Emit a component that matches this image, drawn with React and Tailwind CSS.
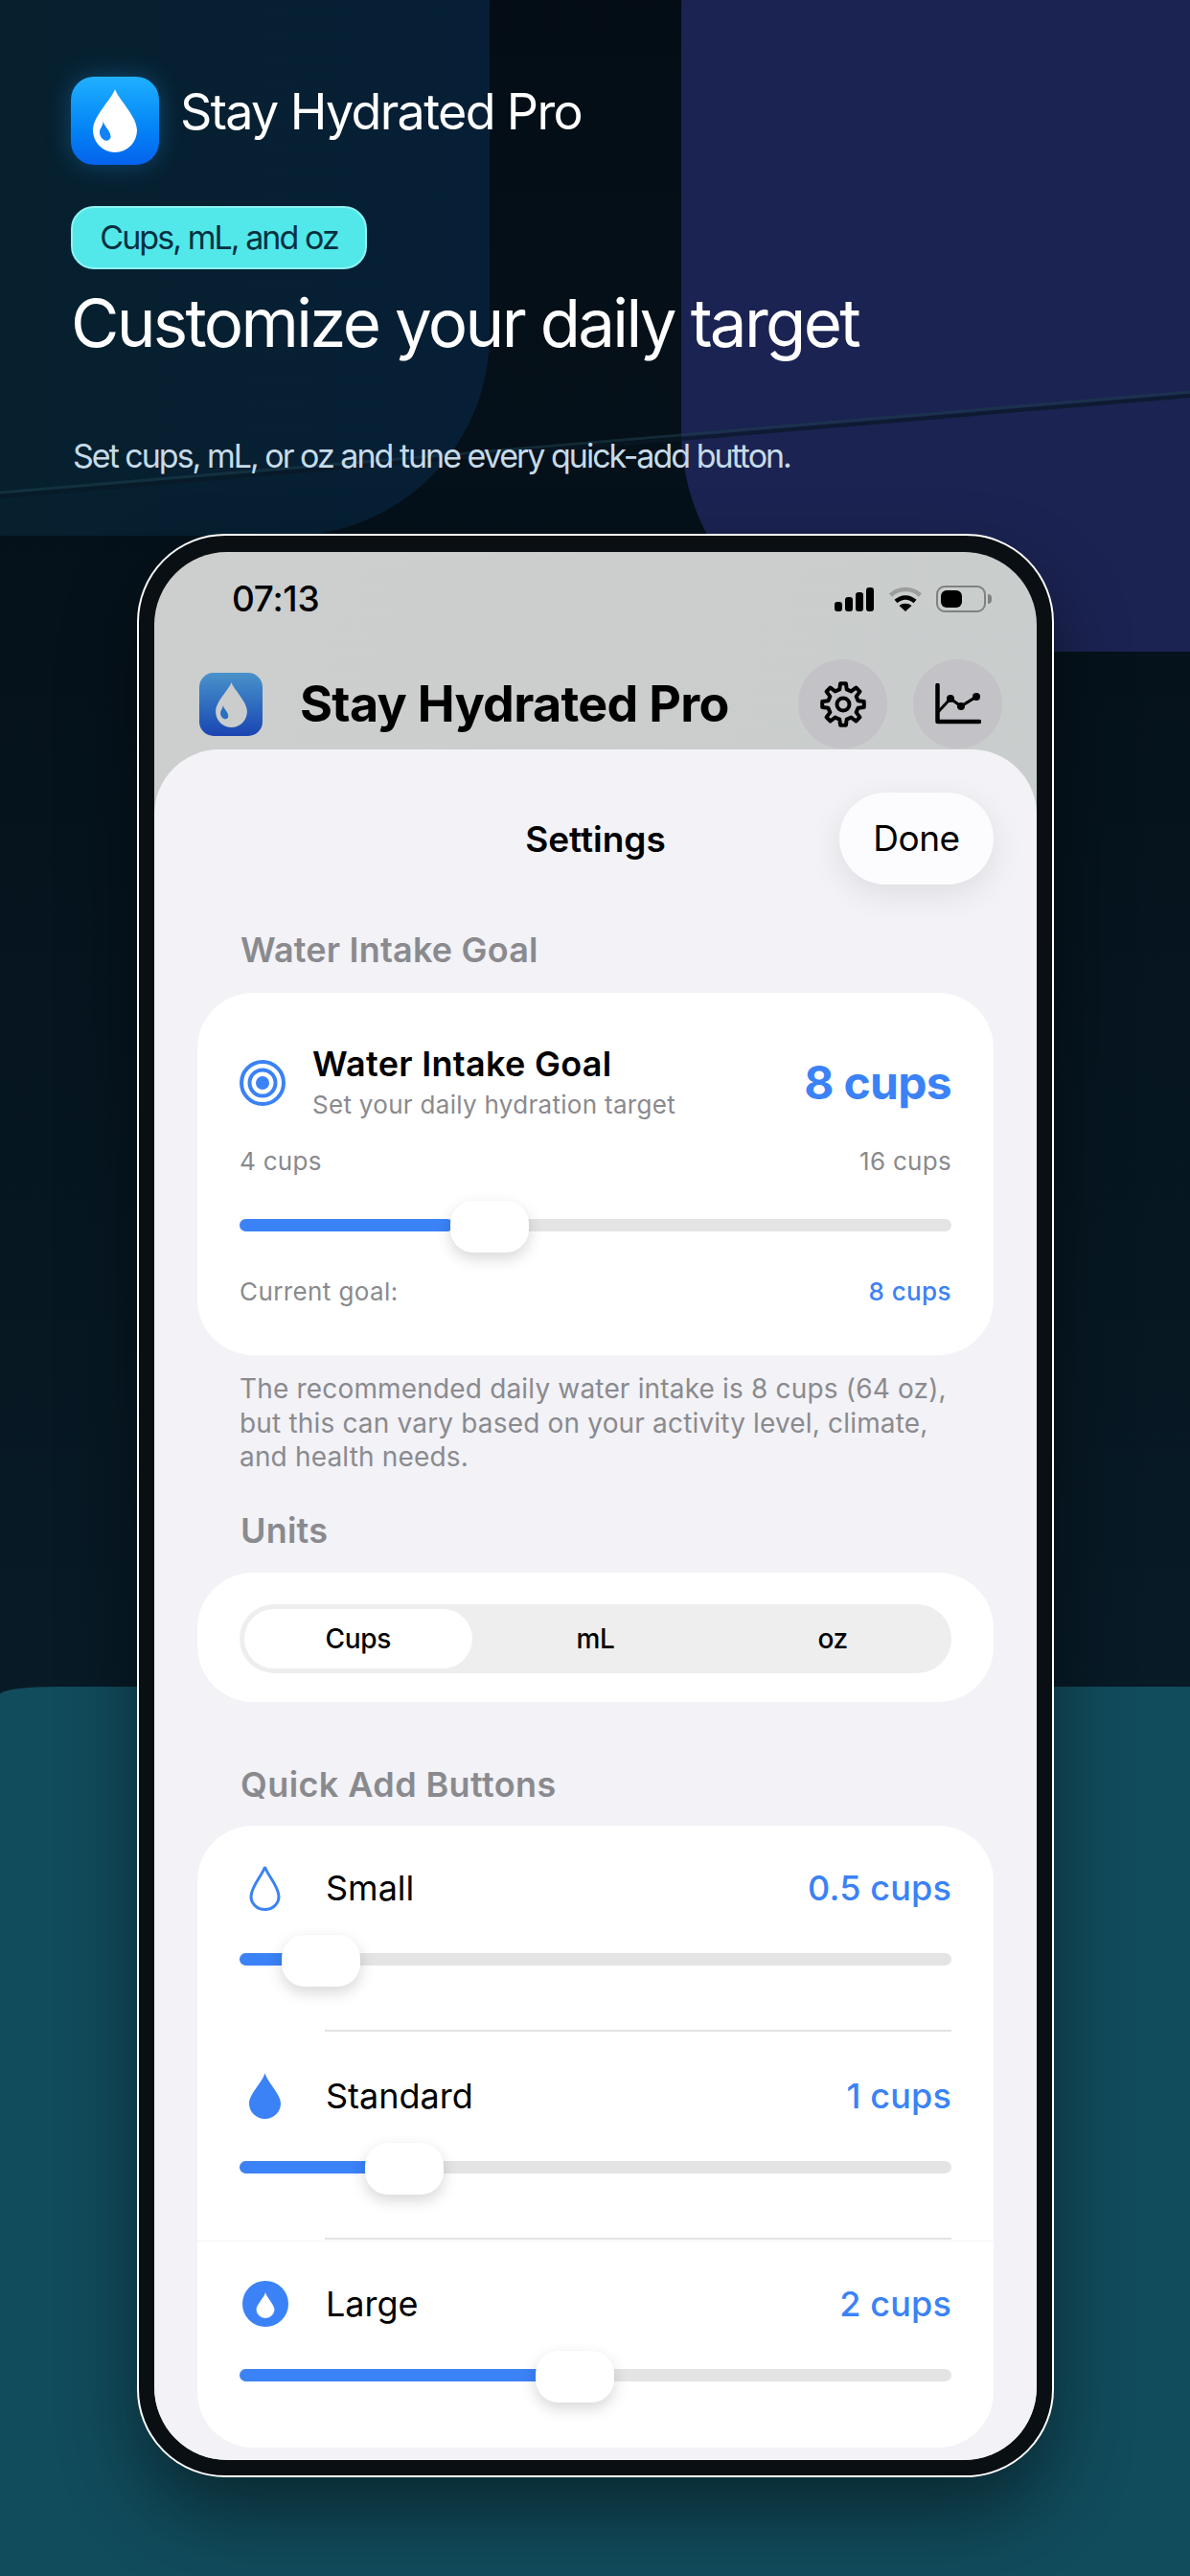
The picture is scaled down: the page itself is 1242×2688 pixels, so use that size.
const F = { fontFamily: 'Inter, "Liberation Sans", sans-serif' };

function Drop({ className, inner }) {
  return (
    <svg viewBox="0 0 46 66" className={className}>
      <path d="M23 0C26 10 46 28 46 43A23 23 0 0 1 0 43C0 28 20 10 23 0Z" fill="currentColor" />
      <path d="M10.700 33C11 38 18 43 18.500 49C19 53 14 55 11.500 53C8 51 6 46 7.500 42C9 39 10.700 37 10.700 33Z" fill={inner} />
    </svg>
  );
}

function gearPath() {
  const pts = [];
  const teeth = 8;
  for (let i = 0; i < teeth; i++) {
    const a = (i * 2 * Math.PI) / teeth;
    const s = (2 * Math.PI) / teeth;
    [[-0.3, 16], [-0.17, 22], [0.17, 22], [0.3, 16]].forEach(([o, r]) => {
      const t = a + o * s;
      pts.push(`${(24 + r * Math.sin(t)).toFixed(2)} ${(24 - r * Math.cos(t)).toFixed(2)}`);
    });
  }
  return `M${pts.join("L")}Z`;
}

function Gear() {
  return (
    <svg viewBox="0 0 48 48" className="h-[48px] w-[48px]" fill="none" stroke="#000" strokeWidth="4" strokeLinejoin="round">
      <path d={gearPath()} />
      <circle cx="24" cy="24" r="6.500" />
    </svg>
  );
}

function Chart() {
  return (
    <svg viewBox="0 0 48 43" className="h-[43px] w-[48px]" fill="none" stroke="#000" strokeLinecap="round" strokeLinejoin="round">
      <path d="M2.500 2V40H46" strokeWidth="4.500" />
      <path d="M3 30L16 16L27 24L43 14" strokeWidth="3" />
      <circle cx="16" cy="16" r="4" fill="#000" stroke="none" />
      <circle cx="27" cy="24" r="4" fill="#000" stroke="none" />
      <circle cx="43" cy="14" r="4" fill="#000" stroke="none" />
    </svg>
  );
}

function Slider({ fill, thumb }) {
  return (
    <div className="relative h-[13px] w-full rounded-full bg-[#e4e4e5]">
      <div className="h-full rounded-full bg-[#3b82f6]" style={{ width: fill }} />
      <div className="absolute top-[-19px] h-[54px] w-[82px] rounded-[24px] bg-white shadow-[0_6px_16px_rgba(0,0,0,0.16)]" style={{ left: thumb }} />
    </div>
  );
}

function QuickRow({ icon, label, value, fill, thumb, divider, line }) {
  return (
    <div className="relative h-[217px] pt-[40px]">
      <div className="flex h-[50px] items-center">
        <div className="flex w-[90px] justify-start">{icon}</div>
        <span className="flex-1 text-[36px] leading-[50px] text-black">{label}</span>
        <span className="text-[36px] leading-[50px] font-medium tracking-[0.15px] text-[#3b82f6]">{value}</span>
      </div>
      <div className="mt-[43px]"><Slider fill={fill} thumb={thumb} /></div>
      {divider && <div className="absolute bottom-[2px] left-[89px] right-0 h-[2px] bg-[#e3e3e5]" />}
      {line && <div className="absolute bottom-0 left-[-44px] right-[-44px] h-[1px] bg-[#f4f4f6]" />}
    </div>
  );
}

export default function App() {
  return (
    <div className="relative h-[2688px] w-[1242px] overflow-hidden bg-gradient-to-b from-[#040d15] to-[#0a2230]" style={F}>
      <div className="absolute left-0 top-0 h-[559px] w-[511px] rounded-br-[210px] bg-gradient-to-r from-[#06202e] to-[#071f36]" />
      <div className="absolute left-[711px] top-[-120px] h-[800px] w-[700px] rounded-tl-[130px] rounded-bl-[230px] bg-[#1b2352]" />
      <div className="absolute left-0 top-[1760px] h-[928px] w-[1242px] rounded-tl-[60px_8px] bg-[#114c5c]" />
      <svg className="absolute left-0 top-[400px] h-[130px] w-[1242px]" viewBox="0 0 1242 130">
        <path d="M0 114L1242 9" stroke="#1c3f4c" strokeWidth="3" opacity="0.55" />
        <path d="M0 118L1242 13" stroke="#0a1826" strokeWidth="4" opacity="0.75" />
      </svg>

      <div className="relative flex flex-col px-[74px] pt-[80px]">
        <div className="flex items-start gap-[22px]">
          <div className="flex h-[92px] w-[92px] items-center justify-center rounded-[24px] bg-gradient-to-b from-[#20b0ff] to-[#0862ee] shadow-[0_0_26px_rgba(40,170,255,0.3)]">
            <Drop className="h-[66px] w-[46px] text-white" inner="#1183f7" />
          </div>
          <span className="mt-[5px] text-[52px] leading-[64px] tracking-[-1.650px] text-white">Stay Hydrated Pro</span>
        </div>
        <div className="mt-[43px] flex h-[66px] w-[309px] items-center justify-center rounded-[24px] border-2 border-[#8df3f3] bg-[#52e8ea] pb-[2px] text-[34px] tracking-[-1.950px] text-[#06303f]">
          Cups, mL, and oz
        </div>
        <h1 className="mt-[15px] text-[69px] leading-[82px] font-normal tracking-[-2.670px] text-white">Customize your daily target</h1>
        <p className="ml-[2px] mt-[76px] text-[34px] leading-[44px] tracking-[-2px] text-[#c6dbe8]">Set cups, mL, or oz and tune every quick-add button.</p>
      </div>

      <div className="absolute left-[143px] top-[557px] h-[2028px] w-[957px] rounded-[92px] border-2 border-white bg-[#0a0f13] px-[16px] pb-[16px] pt-[17px] shadow-[0_40px_80px_rgba(0,0,0,0.45)]">
        <div className="flex h-full flex-col overflow-hidden rounded-[76px] bg-gradient-to-br from-[#cdcfce] to-[#c6cbcb]">
          <div className="flex h-[98px] shrink-0 items-center justify-between pl-[81px] pr-[47px]">
            <span className="text-[37px] leading-[44px] font-medium tracking-[-0.3px] text-black">07:13</span>
            <div className="flex items-center gap-[15px]">
              <svg viewBox="0 0 42 25" className="h-[25px] w-[42px]">
                <rect x="0" y="15" width="8" height="10" rx="3" />
                <rect x="11" y="10" width="8" height="15" rx="3" />
                <rect x="22" y="5" width="8" height="20" rx="3" />
                <rect x="33" y="0" width="8" height="25" rx="3" />
              </svg>
              <svg viewBox="0 0 34 26" className="h-[26px] w-[34px]" fill="none">
                <path d="M1.500 9C10 1 24 1 32.500 9" stroke="#9c9e9e" strokeWidth="4.500" />
                <path d="M7 15.500C13 10 21 10 27 15.500" stroke="#000" strokeWidth="4.500" />
                <path d="M17 26L10.500 20C14 17 20 17 23.500 20Z" fill="#000" />
              </svg>
              <div className="flex items-center gap-[2px]">
                <div className="h-[28px] w-[52px] rounded-[9px] border-2 border-[#808282] p-[3px]">
                  <div className="h-full w-[22px] rounded-[6px] bg-black" />
                </div>
                <div className="h-[10px] w-[4px] rounded-r-full bg-[#808282]" />
              </div>
            </div>
          </div>
          <div className="flex h-[108px] shrink-0 items-start pl-[47px] pr-[36px] pt-[14px]">
            <div className="mt-[14px] flex h-[66px] w-[66px] items-center justify-center rounded-[15px] bg-gradient-to-b from-[#4a92ca] to-[#1c44b2]">
              <Drop className="h-[47px] w-[33px] text-[#cbcdcd]" inner="#2a6fc0" />
            </div>
            <span className="ml-[39px] mt-[12px] text-[52px] leading-[70px] font-bold tracking-[-0.7px] text-black">Stay Hydrated Pro</span>
            <div className="ml-auto flex gap-[27px]">
              <div className="flex h-[93px] w-[93px] items-center justify-center rounded-full bg-[#c3c2c6]"><Gear /></div>
              <div className="flex h-[93px] w-[93px] items-center justify-center rounded-full bg-[#c3c2c6]"><Chart /></div>
            </div>
          </div>
          <div className="relative flex-1 rounded-t-[68px] bg-[#f2f2f7] px-[45px]">
            <div className="relative flex h-[141px] items-center justify-center pt-[46px]">
              <span className="text-[37px] font-semibold text-black">Settings</span>
              <div className="absolute right-0 top-[45px] flex h-[96px] w-[161px] items-center justify-center rounded-full bg-[#fcfcfe] text-[37px] tracking-[-0.5px] text-black shadow-[0_10px_34px_rgba(0,0,0,0.09)]">Done</div>
            </div>
            <div className="ml-[45px] mt-[46px] text-[36px] leading-[44px] font-semibold tracking-[0.2px] text-[#8a8a8e]">Water Intake Goal</div>
            <div className="mt-[23px] h-[378px] rounded-[58px] bg-white px-[44px] pt-[52px]">
              <div className="flex items-center">
                <svg viewBox="0 0 48 48" className="h-[48px] w-[48px]">
                  <circle cx="24" cy="24" r="22" fill="none" stroke="#3b82f6" strokeWidth="4" />
                  <circle cx="24" cy="24" r="13.500" fill="none" stroke="#3b82f6" strokeWidth="4" />
                  <circle cx="24" cy="24" r="7" fill="#3b82f6" />
                </svg>
                <div className="ml-[28px] flex-1">
                  <div className="text-[36px] leading-[44px] font-semibold tracking-[0.3px] text-black">Water Intake Goal</div>
                  <div className="mt-[3px] text-[26px] leading-[36px] tracking-[0.3px] text-[#8a8a8e]">Set your daily hydration target</div>
                </div>
                <div className="text-[48px] leading-[60px] font-bold tracking-[-0.7px] text-[#3b82f6]">8 cups</div>
              </div>
              <div className="mt-[23px] flex justify-between text-[26px] leading-[36px] tracking-[0.3px] text-[#8a8a8e]">
                <span>4 cups</span>
                <span>16 cups</span>
              </div>
              <div className="mt-[42px]"><Slider fill="30%" thumb="220px" /></div>
              <div className="mt-[45px] flex justify-between text-[26px] leading-[36px] tracking-[0.4px] text-[#8a8a8e]">
                <span>Current goal:</span>
                <span className="font-medium text-[#3b82f6]">8 cups</span>
              </div>
            </div>
            <p className="mx-[44px] mt-[18px] text-[28px] leading-[35.5px] tracking-[0.17px] text-[#8a8a8e]">
              The recommended daily water intake is 8 cups (64 oz), but this can vary based on your activity level, climate, and health needs.
            </p>
            <div className="ml-[45px] mt-[36px] text-[36px] leading-[44px] font-semibold tracking-[0.2px] text-[#8a8a8e]">Units</div>
            <div className="mt-[22px] h-[135px] rounded-[58px] bg-white px-[44px] pt-[33px]">
              <div className="grid h-[72px] grid-cols-3 items-center rounded-full bg-[#eeeeef] text-[28px] font-medium tracking-[-0.3px] text-black">
                <div className="mx-[5px] flex h-[62px] items-center justify-center rounded-full bg-white">Cups</div>
                <div className="text-center">mL</div>
                <div className="text-center">oz</div>
              </div>
            </div>
            <div className="ml-[45px] mt-[64px] text-[36px] leading-[44px] font-semibold tracking-[0.4px] text-[#8a8a8e]">Quick Add Buttons</div>
            <div className="mt-[21px] h-[649px] rounded-[58px] bg-white px-[44px]">
              <QuickRow
                icon={<svg viewBox="0 0 33 48" className="ml-[10px] h-[48px] w-[33px]"><path d="M16.500 2C18.500 10 31 22 31 33A14.500 13.500 0 0 1 2 33C2 22 14.500 10 16.500 2Z" fill="none" stroke="#3b82f6" strokeWidth="3" /></svg>}
                label="Small" value="0.5 cups" fill="10%" thumb="44px" divider
              />
              <QuickRow
                icon={<svg viewBox="0 0 33 48" className="ml-[10px] h-[48px] w-[33px]"><path d="M16.500 0C18.500 9 33 22 33 32A16.500 16 0 0 1 0 32C0 22 14.500 9 16.500 0Z" fill="#3b82f6" /></svg>}
                label="Standard" value="1 cups" fill="22%" thumb="131px" divider line
              />
              <QuickRow
                icon={<svg viewBox="0 0 48 48" className="ml-[3px] h-[48px] w-[48px]"><circle cx="24" cy="24" r="24" fill="#3b82f6" /><path d="M24 12C25 17 33.500 25 33.500 30A9.500 9 0 0 1 14.500 30C14.500 25 23 17 24 12Z" fill="#fff" /></svg>}
                label="Large" value="2 cups" fill="44%" thumb="309px"
              />
            </div>
          </div>
        </div>
      </div>
    </div>
  );
}
